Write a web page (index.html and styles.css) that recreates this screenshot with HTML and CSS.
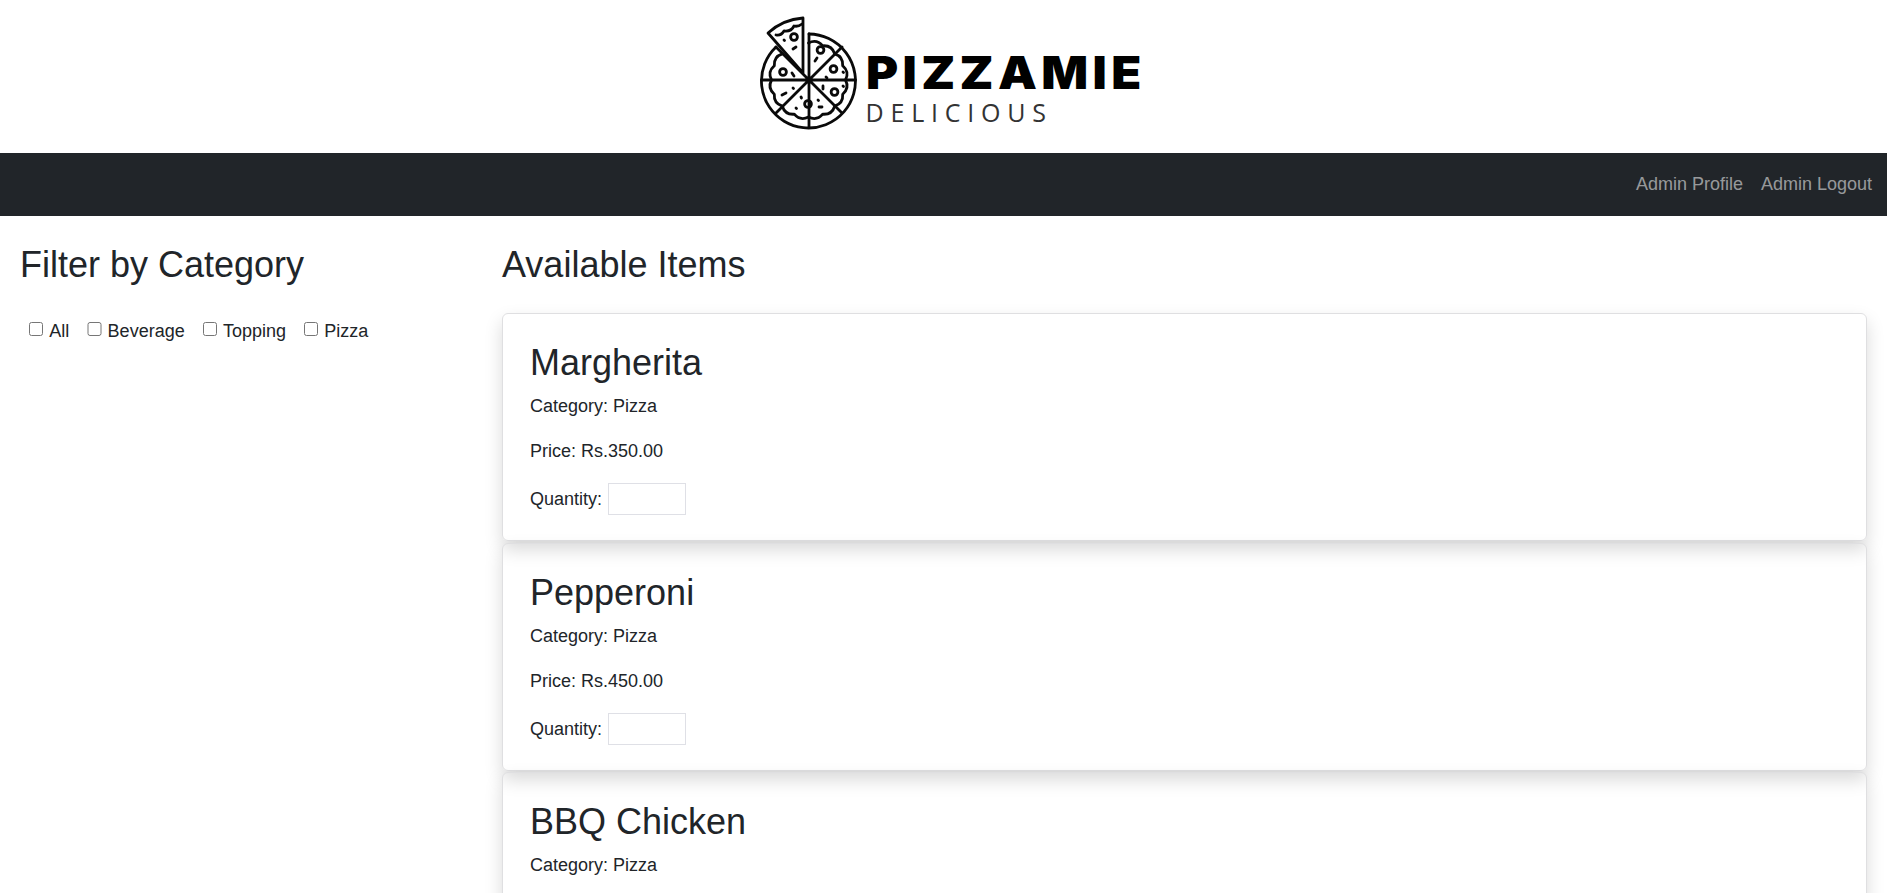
FILE: index.html
```html
<!DOCTYPE html>
<html lang="en">
<head>
    <meta charset="UTF-8">
    <meta name="viewport" content="width=device-width, initial-scale=1.0">
    <title>Pizzamie - Admin</title>
    <link rel="stylesheet" href="styles.css">
</head>
<body>
    <header class="brand">
        <svg class="brand-mark" viewBox="0 0 120 125" width="120" height="125" aria-hidden="true">
            <g fill="none" stroke="#0a0a0a" stroke-width="2.800" stroke-linejoin="round" stroke-linecap="round">
                <!-- whole pizza, one slice lifted out -->
                <path d="M58 24 A47 47 0 1 1 25 37"/>
                <path d="M58 24 V117 M10.500 70 H104.500 M25 37 L58 70 M58 70 L91 37 M58 70 L91 103 M58 70 L25 103"/>
                <path d="M57.500 33 Q65.700 28.800 71.700 35.800 Q80.900 35.100 83.700 43.800 Q92.400 46.600 91.700 55.800 Q98.700 61.800 94.500 70 Q98.700 78.200 91.700 84.200 Q92.400 93.400 83.700 96.200 Q80.900 104.900 71.700 104.200 Q65.700 111.200 57.500 107 Q49.300 111.200 43.300 104.200 Q34.100 104.900 31.300 96.200 Q22.600 93.400 23.300 84.200 Q16.300 78.200 20.500 70 Q16.300 61.800 23.300 55.800 Q22.600 46.600 31.300 43.800"/>
                <!-- lifted slice -->
                <path d="M52 63 V8 A58 58 0 0 0 17 23 Z"/>
                <path d="M25 25 Q30 26 33 21 Q40 22 43 16 Q47 17 51 14"/>
                <!-- toppings -->
                <circle cx="43" cy="27" r="3.400"/>
                <circle cx="69.500" cy="40" r="3.400"/>
                <circle cx="82.500" cy="59" r="3.400"/>
                <circle cx="83.500" cy="82" r="3.400"/>
                <circle cx="57" cy="94" r="3.400"/>
                <circle cx="32" cy="62" r="3.400"/>
                <path d="M42 39 L45 37 M33 30 L33.500 30.500 M64 51 L66 48 M75 67 L76 68 M92 62 L92.500 62.500 M72 76 V79 M92 76 L92.500 76.500 M68 97 L71 97 M67 90 L67.500 90.500 M50 87 L50.500 88 M45 98 L45.500 98.500 M31 85 L35 83 M42 78 L42.500 78.500 M41 63 L43 66"/>
            </g>
        </svg>
        <div class="brand-words">
            <span class="brand-name">PIZZAMIE</span>
            <span class="brand-tag">DELICIOUS</span>
        </div>
    </header>

    <nav class="navbar">
        <a href="#">Admin Profile</a>
        <a href="#">Admin Logout</a>
    </nav>

    <main class="layout">
        <aside class="filters">
            <h2>Filter by Category</h2>
            <div class="filter-list">
                <label><input type="checkbox"> All</label>
                <label><input type="checkbox"> Beverage</label>
                <label><input type="checkbox"> Topping</label>
                <label><input type="checkbox"> Pizza</label>
            </div>
        </aside>

        <section class="items">
            <h2>Available Items</h2>

            <div class="card">
                <h3>Margherita</h3>
                <p>Category: Pizza</p>
                <p>Price: Rs.350.00</p>
                <p class="qty">Quantity: <input type="text"></p>
            </div>

            <div class="card">
                <h3>Pepperoni</h3>
                <p>Category: Pizza</p>
                <p>Price: Rs.450.00</p>
                <p class="qty">Quantity: <input type="text"></p>
            </div>

            <div class="card">
                <h3>BBQ Chicken</h3>
                <p>Category: Pizza</p>
                <p>Price: Rs.500.00</p>
                <p class="qty">Quantity: <input type="text"></p>
            </div>
        </section>
    </main>
</body>
</html>
```

FILE: styles.css
```css
html, body {
    height: 100%;
    overflow: hidden;
}

body {
    margin: 0;
    font-family: "Liberation Sans", Arial, sans-serif;
    font-size: 18px;
    line-height: 1.5;
    color: #212529;
    background-color: #fff;
}

/* Logo strip */
.brand {
    height: 153px;
    box-sizing: border-box;
    display: flex;
    justify-content: center;
    align-items: flex-start;
    padding-top: 10px;
    padding-left: 1px;
}

.brand-mark {
    flex: none;
}

.brand-words {
    width: 272px;
    display: flex;
    flex-direction: column;
    margin-left: -5px;
    padding-top: 39px;
}

.brand-name {
    font-family: Inter, sans-serif;
    font-weight: 900;
    font-size: 45px;
    line-height: 48px;
    letter-spacing: 4px;
    white-space: nowrap;
    color: #000;
    transform: scaleX(1.09);
    transform-origin: left center;
}

.brand-tag {
    font-family: "Open Sans", sans-serif;
    font-weight: 400;
    font-size: 25px;
    line-height: 30px;
    letter-spacing: 6.800px;
    color: #333;
}

/* Dark nav */
.navbar {
    height: 63px;
    background-color: #212529;
    display: flex;
    justify-content: flex-end;
    align-items: center;
    gap: 18px;
    padding-right: 15px;
}

.navbar a {
    color: rgba(255, 255, 255, 0.55);
    text-decoration: none;
}

/* Two columns */
.layout {
    display: grid;
    grid-template-columns: 482px 1fr;
    padding: 0 20px;
}

h2 {
    font-size: 36px;
    font-weight: 500;
    line-height: 1.2;
    margin: 0 0 27px;
    padding-top: 27px;
}

.filter-list {
    display: flex;
    gap: 18px;
    padding-left: 9px;
    padding-top: 5px;
}

.filter-list label {
    display: flex;
    align-items: center;
    gap: 6px;
}

.filter-list input {
    width: 14.300px;
    height: 14.300px;
    margin: 0 0 5px;
}

/* Item cards - no fill, so the card above drops its shadow through */
.card {
    border: 1px solid #dfdfe1;
    border-radius: 6px;
    padding: 27px 27px 25px;
    margin-bottom: 1.300px;
    box-shadow: 0 8.800px 17.600px rgba(0, 0, 0, 0.15);
}

.card h3 {
    font-size: 36px;
    font-weight: 500;
    line-height: 1.2;
    margin: 0 0 9px;
}

.card p {
    margin: 0 0 18px;
}

.card .qty {
    margin: 0;
}

.qty input {
    width: 78px;
    height: 32px;
    box-sizing: border-box;
    margin-left: 1px;
    border: 1px solid #dfe0e6;
    padding: 0;
    vertical-align: 1px;
}
```
